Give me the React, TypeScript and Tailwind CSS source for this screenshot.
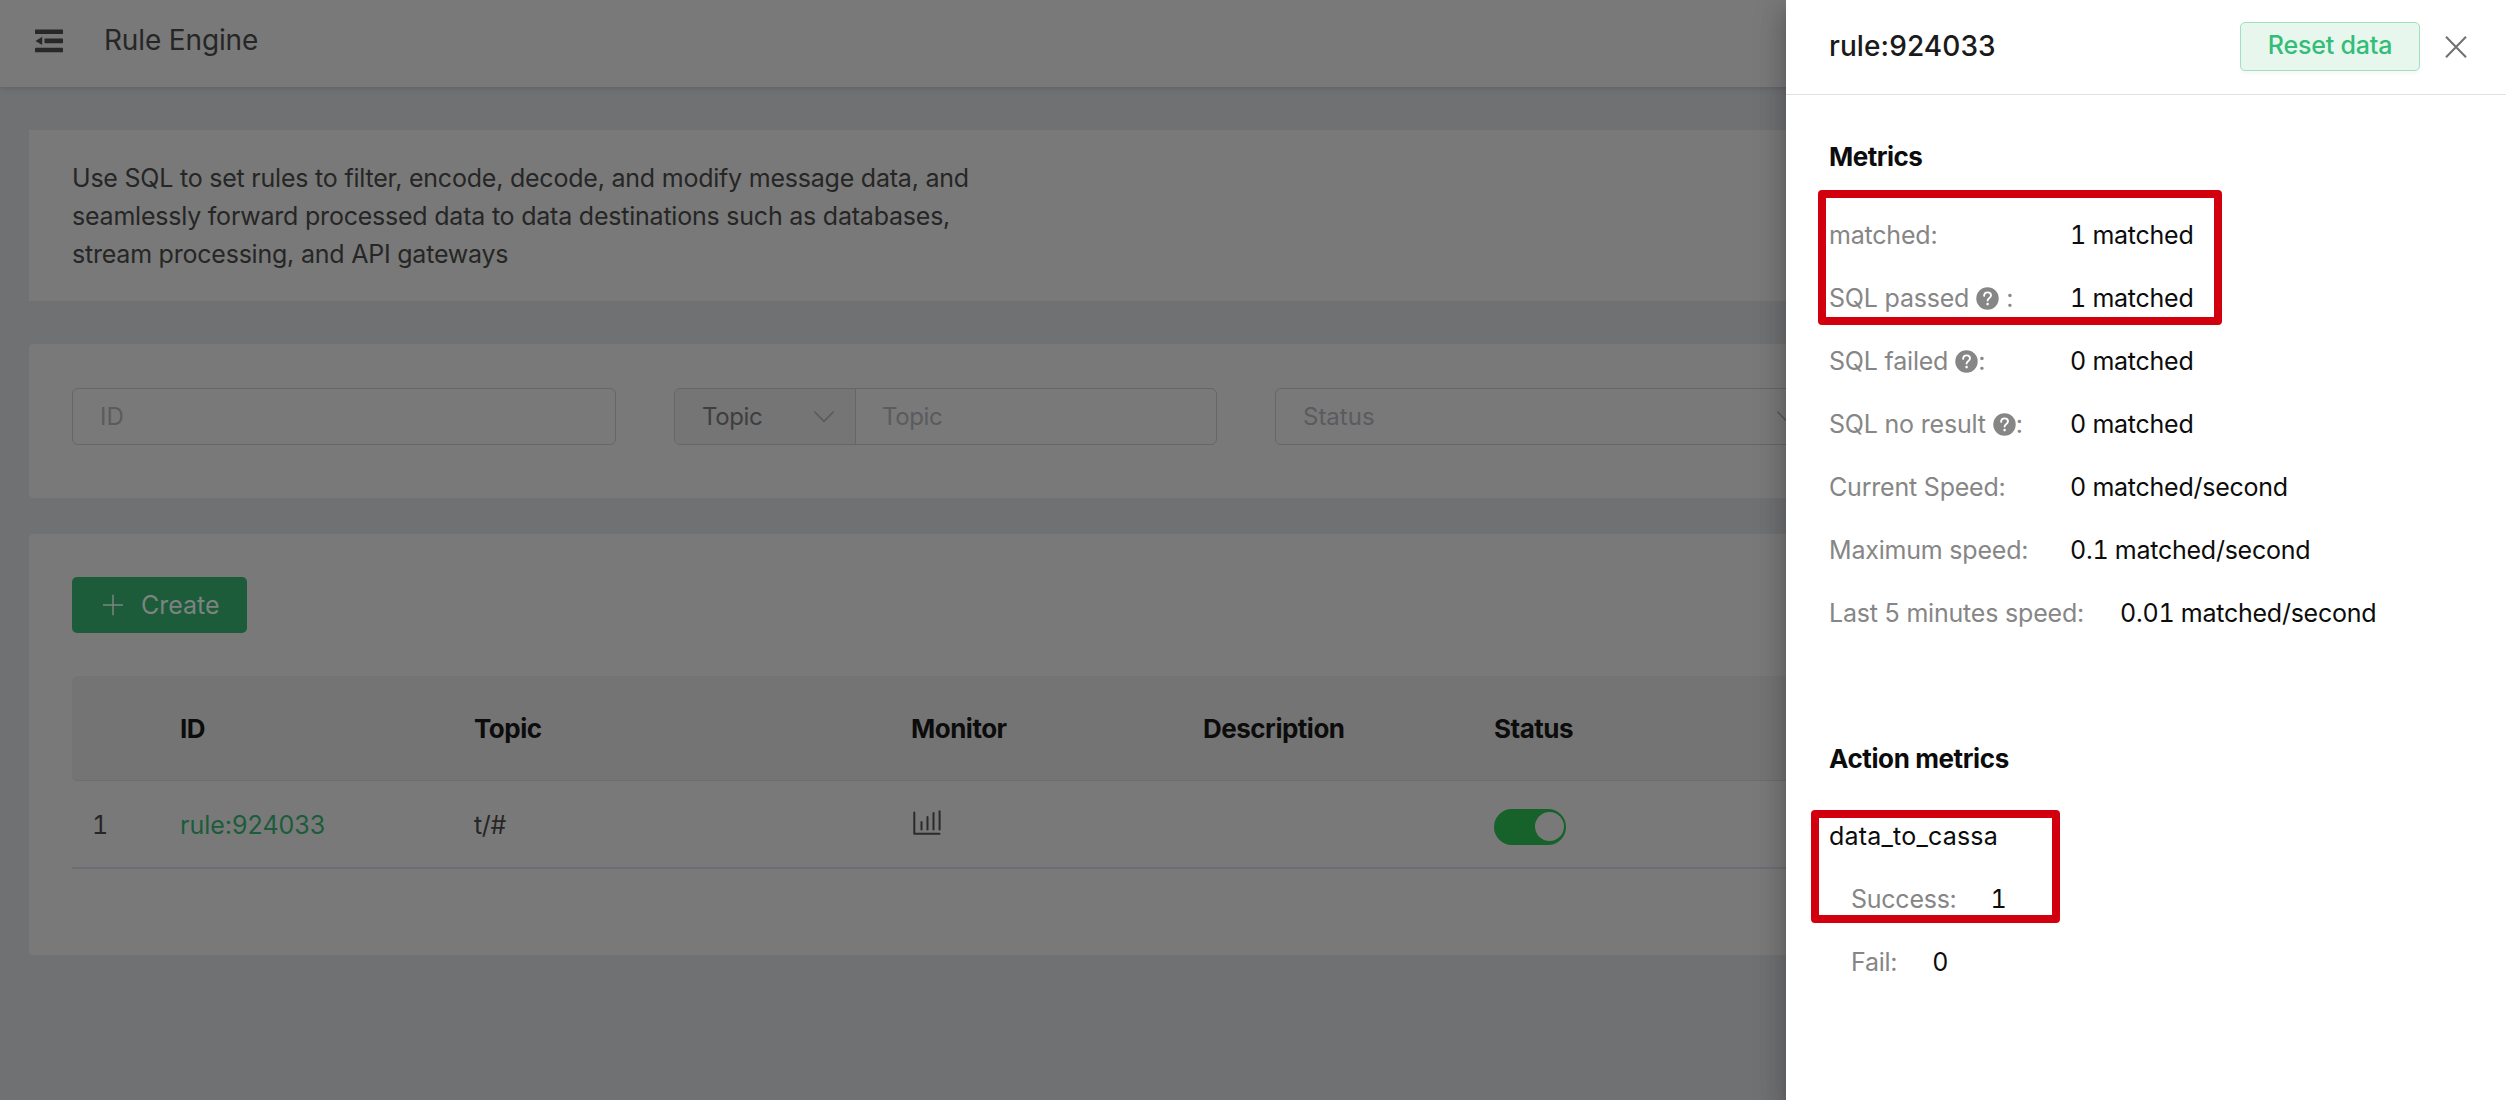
import type { ReactNode } from 'react';

function FoldIcon() {
  return (
    <svg width="28" height="24" viewBox="0 0 28 24" fill="#282828">
      <rect x="0" y="0.5" width="28" height="4.6" rx="0.6" />
      <rect x="9.5" y="9.6" width="18.5" height="4.6" rx="0.6" />
      <rect x="0" y="18.7" width="28" height="4.6" rx="0.6" />
      <path d="M0.5 11.9 L7.2 7.8 V16 Z" />
    </svg>
  );
}

function ChevronDown() {
  return (
    <svg width="20" height="12" viewBox="0 0 20 12" fill="none" stroke="#5a5b5f" strokeWidth="1.6">
      <path d="M0.8 1 L10 10.4 L19.2 1" strokeLinecap="round" strokeLinejoin="round" />
    </svg>
  );
}

function PlusIcon() {
  return (
    <svg width="20" height="22" viewBox="0 0 20 22" fill="none" stroke="#7d8480" strokeWidth="1.5">
      <path d="M0 11 H20 M10 0.7 V21.3" />
    </svg>
  );
}

function ChartIcon() {
  return (
    <svg width="28" height="25" viewBox="0 0 28 25" fill="none" stroke="#2b2b2b" strokeWidth="2" strokeLinecap="round">
      <path d="M1.3 2.5 V23.7 H26.5" strokeLinejoin="round" />
      <path d="M8.5 12 V19.6 M14.5 7 V19.6 M20.5 3 V19.6 M26.6 1.2 V19.6" />
    </svg>
  );
}

function QuestionIcon() {
  return (
    <svg className="shrink-0" width="23" height="23" viewBox="0 0 23 23" fill="none">
      <circle cx="11.5" cy="11.5" r="11.2" fill="#868686" />
      <path
        d="M8.1 8.9 C8.2 6.7 9.6 5.4 11.6 5.4 C13.7 5.4 15 6.7 15 8.5 C15 10.9 11.6 11 11.6 13.6"
        stroke="#fff"
        strokeWidth="1.9"
        strokeLinecap="round"
      />
      <circle cx="11.6" cy="17.1" r="1.3" fill="#fff" />
    </svg>
  );
}

function CloseIcon() {
  return (
    <svg width="22" height="22" viewBox="0 0 22 22" fill="none" stroke="#707070" strokeWidth="2">
      <path d="M1 0.7 L21 21.3 M21 0.7 L1 21.3" />
    </svg>
  );
}

const columns = ['', 'ID', 'Topic', 'Monitor', 'Description', 'Status'];
const tableGrid = 'grid grid-cols-[108px_294px_437px_292px_291px_1fr] items-center';

function Row({ label, children }: { label: ReactNode; children: ReactNode }) {
  return (
    <div className="flex h-[63px] items-center whitespace-nowrap">
      <div className="flex min-w-[241px] shrink-0 items-center tracking-[-0.2px] text-[#868686]">{label}</div>
      <div className="tracking-[-0.25px] tabular-nums">{children}</div>
    </div>
  );
}

function HelpLabel({ text, spaced = false }: { text: string; spaced?: boolean }) {
  return (
    <>
      <span className="mr-[7px]">{text}</span>
      <QuestionIcon />
      <span className={spaced ? 'ml-[7px]' : ''}>:</span>
    </>
  );
}

function Drawer() {
  return (
    <aside className="absolute inset-y-0 right-0 w-[720px] bg-white text-[25px] text-[#0c0c0c] shadow-[0_8px_10px_-5px_rgba(0,0,0,0.2),0_16px_24px_2px_rgba(0,0,0,0.14),0_6px_30px_5px_rgba(0,0,0,0.12)]">
      <header className="flex h-[95px] items-center border-b border-[#e0e0e0] pb-[2px] pl-[43px] pr-[39px]">
        <h2 className="text-[28px] font-medium leading-[40px] tracking-[0.1px] text-[#1a1a1a]">rule:924033</h2>
        <button className="ml-auto flex h-[49px] w-[180px] items-center justify-center rounded-[5px] border border-[#9fe0bf] bg-[#e7f7ee] font-medium tracking-[-0.2px] text-[#34bd78] shadow-[0_3px_3px_rgba(0,0,0,0.03)]">
          Reset data
        </button>
        <button className="ml-[25px] mt-[2px]">
          <CloseIcon />
        </button>
      </header>

      <section className="pl-[43px] pt-[41px]">
        <h3 className="h-[42px] text-[26px] font-bold leading-[42px] tracking-[-0.5px]">Metrics</h3>
        <div className="mt-[26px]">
          <Row label="matched:">1 matched</Row>
          <Row label={<HelpLabel text="SQL passed" spaced />}>1 matched</Row>
          <Row label={<HelpLabel text="SQL failed" />}>0 matched</Row>
          <Row label={<HelpLabel text="SQL no result" />}>0 matched</Row>
          <Row label="Current Speed:">0 matched/second</Row>
          <Row label="Maximum speed:">0.1 matched/second</Row>
          <Row label={<span className="pr-[36px]">Last 5 minutes speed:</span>}>0.01 matched/second</Row>
        </div>
      </section>

      <section className="pl-[43px] pt-[93px]">
        <h3 className="h-[42px] text-[26px] font-bold leading-[42px] tracking-[-0.4px]">Action metrics</h3>
        <div className="mt-[25px] flex h-[63px] items-center tracking-[0.2px]">data_to_cassa</div>
        <div className="flex h-[63px] items-center pl-[22px]">
          <span className="tracking-[-0.25px] text-[#868686]">Success:</span>
          <span className="ml-[34px] tabular-nums">1</span>
        </div>
        <div className="flex h-[63px] items-center pl-[22px]">
          <span className="tracking-[-0.25px] text-[#868686]">Fail:</span>
          <span className="ml-[35px] tabular-nums">0</span>
        </div>
      </section>

      <div className="absolute left-[32px] top-[190px] h-[135px] w-[404px] rounded-[4px] border-8 border-[#d2000f]" />
      <div className="absolute left-[25px] top-[810px] h-[113px] w-[249px] rounded-[4px] border-8 border-[#d2000f]" />
    </aside>
  );
}

export default function App() {
  return (
    <div className="relative h-[1100px] w-full overflow-hidden bg-[#707173] font-['Inter','Liberation_Sans',sans-serif] text-[25px] text-[#262626]">
      <header className="flex h-[87px] items-center bg-[#797979] pb-[6px] pl-[35px] shadow-[0_1px_6px_rgba(60,70,80,0.35)]">
        <FoldIcon />
        <h1 className="-mt-[1px] ml-[41px] text-[28px] leading-[40px] tracking-[-0.15px]">Rule Engine</h1>
      </header>

      <main className="px-[29px] pt-[43px]">
        <section className="h-[171px] bg-[#797979] pl-[43px] pt-[29px]">
          <p className="w-[940px] leading-[38px] tracking-[-0.22px]">
            Use SQL to set rules to filter, encode, decode, and modify message data, and
            <br />
            seamlessly forward processed data to data destinations such as databases,
            <br />
            stream processing, and API gateways
          </p>
        </section>

        <section className="mt-[43px] flex h-[154px] items-start rounded-[4px] bg-[#797979] pl-[43px] pt-[44px] text-[24px] text-[#5a5b5f]">
          <div className="flex h-[57px] w-[544px] items-center rounded-[6px] border border-[#656668] pl-[27px]">ID</div>
          <div className="ml-[58px] flex h-[57px] w-[543px] items-center rounded-[6px] border border-[#656668]">
            <div className="flex h-full w-[181px] items-center justify-between rounded-l-[5px] border-r border-[#656668] bg-[#757575] pl-[27px] pr-[21px] tracking-[-0.4px] text-[#3d3e40]">
              Topic
              <ChevronDown />
            </div>
            <span className="pl-[26px] tracking-[-0.4px]">Topic</span>
          </div>
          <div className="ml-[58px] flex h-[57px] w-[544px] items-center justify-between rounded-[6px] border border-[#656668] pl-[27px] pr-[21px]">
            Status
            <ChevronDown />
          </div>
        </section>

        <section className="mt-[36px] h-[421px] rounded-[4px] bg-[#797979] px-[43px] pt-[43px]">
          <button className="flex h-[56px] w-[175px] items-center rounded-[5px] bg-[#1c5c3b] pl-[31px] text-[#7d8480]">
            <PlusIcon />
            <span className="ml-[18px] mt-[1px]">Create</span>
          </button>

          <div className="mt-[43px]">
            <div className={`${tableGrid} h-[105px] rounded-t-[6px] rounded-bl-[6px] border-b border-[#6c6c6e] bg-[#747474] text-[26px] font-bold tracking-[-0.5px] text-[#0c0c0c]`}>
              {columns.map((name) => (
                <span key={name}>{name}</span>
              ))}
            </div>
            <div className={`${tableGrid} h-[88px] border-b-2 border-[#6d6e74]`}>
              <span className="pl-[20px] pt-[3px] tabular-nums">1</span>
              <span className="pt-[3px] text-[#1c5c3b]">rule:924033</span>
              <span className="pt-[3px] tracking-[-0.4px]">t/#</span>
              <span className="pb-[4px] pl-[2px]">
                <ChartIcon />
              </span>
              <span />
              <span className="mt-[5px] flex h-[36px] w-[72px] items-center justify-end rounded-full bg-[#17622b] pr-[2px]">
                <span className="size-[29px] rounded-full bg-[#797979]" />
              </span>
            </div>
          </div>
        </section>
      </main>

      <Drawer />
    </div>
  );
}
